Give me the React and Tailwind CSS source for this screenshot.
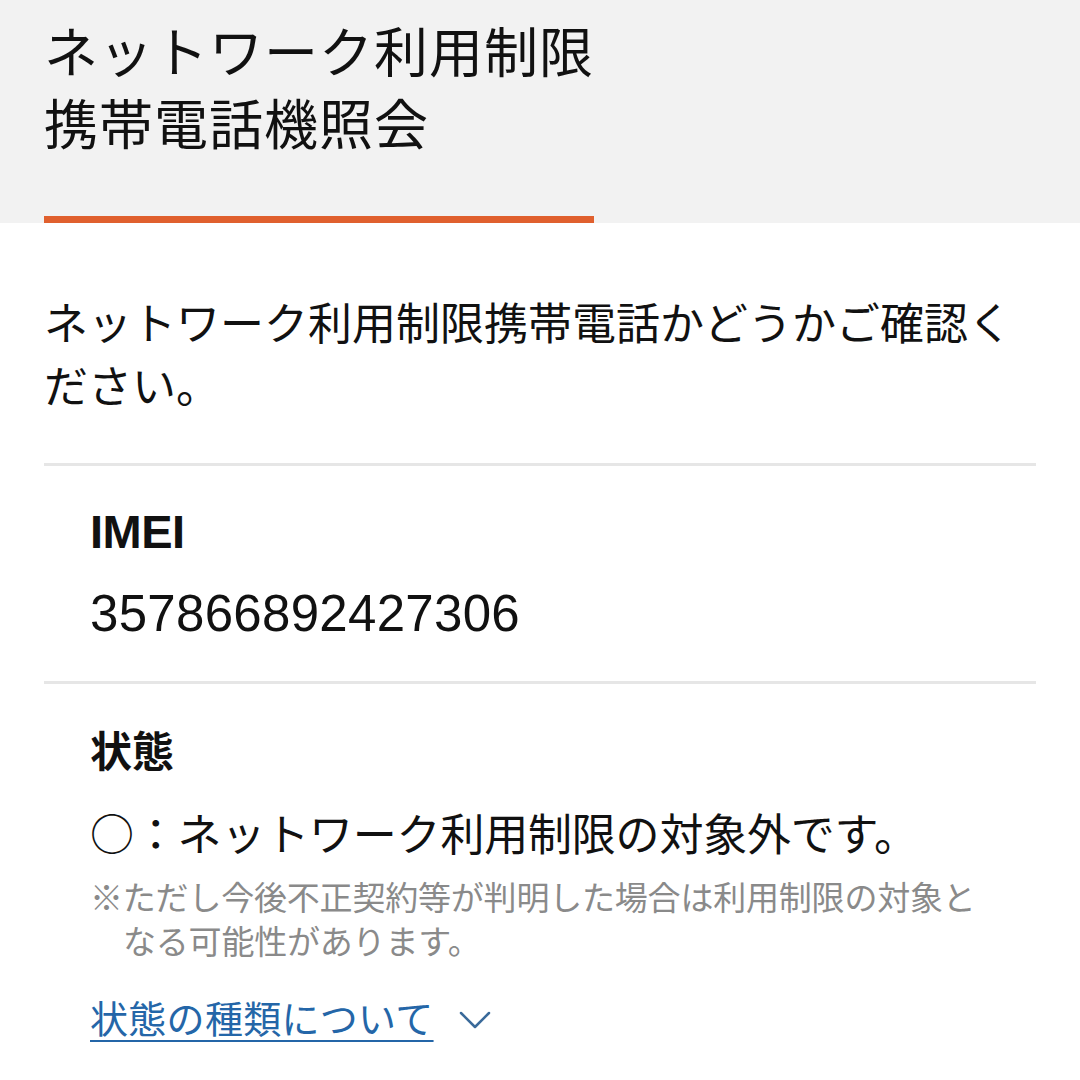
export default function App() {
  const jp = { fontFamily: '"Noto Sans CJK JP", "Noto Sans", sans-serif' };
  return (
    <div className="w-[1080px] h-[1080px] bg-white overflow-hidden text-[#111]" style={jp}>
      <div className="h-[223px] bg-[#f2f2f2] px-[44px] flex flex-col justify-between">
        <h1 className="pt-[14px] text-[54px] leading-[72px] font-normal tracking-[1px]">
          ネットワーク利用制限
          <br />
          携帯電話機照会
        </h1>
        <div className="h-[7px] w-[550px] bg-[#e0602e]" />
      </div>
      <div className="px-[44px]">
        <p className="mt-[67px] text-[44px] leading-[63px] tracking-[0px]">
          ネットワーク利用制限携帯電話かどうかご確認ください。
        </p>
        <div className="mt-[47px] border-t-[3px] border-[#e6e6e6]" />
        <div className="px-[46px]">
          <div
            className="mt-[38px] text-[47px] leading-[56px] font-bold tracking-[-0.5px]"
            style={{ fontFamily: '"Liberation Sans", Arial, sans-serif' }}
          >
            IMEI
          </div>
          <div
            className="mt-[24px] text-[51px] leading-[60px] tracking-[0.3px]"
            style={{ fontFamily: '"Liberation Sans", Arial, sans-serif' }}
          >
            357866892427306
          </div>
        </div>
        <div className="mt-[37px] border-t-[3px] border-[#e6e6e6]" />
        <div className="px-[46px]">
          <div className="mt-[37px] text-[42px] leading-[56px] font-bold">状態</div>
          <div className="mt-[25px] text-[44px] leading-[60px] tracking-[-0.2px]">
            ○：ネットワーク利用制限の対象外です。
          </div>
          <p className="mt-[12px] text-[33px] leading-[44px] text-[#8a8a8a] pl-[1em] -indent-[1em] tracking-[-0.2px]">
            ※ただし今後不正契約等が判明した場合は利用制限の対象となる可能性があります。
          </p>
          <div className="mt-[27px] flex items-center gap-[25px]">
            <span className="text-[38px] leading-[56px] text-[#2466a8] underline decoration-[2px] underline-offset-[7px] tracking-[0.3px]">
              状態の種類について
            </span>
            <svg width="32" height="20" viewBox="0 0 32 20" className="mt-[6px]">
              <polyline points="2,3 16,17 30,3" fill="none" stroke="#3a6a9a" strokeWidth="2.5" strokeLinecap="round" strokeLinejoin="round" />
            </svg>
          </div>
        </div>
      </div>
    </div>
  );
}
